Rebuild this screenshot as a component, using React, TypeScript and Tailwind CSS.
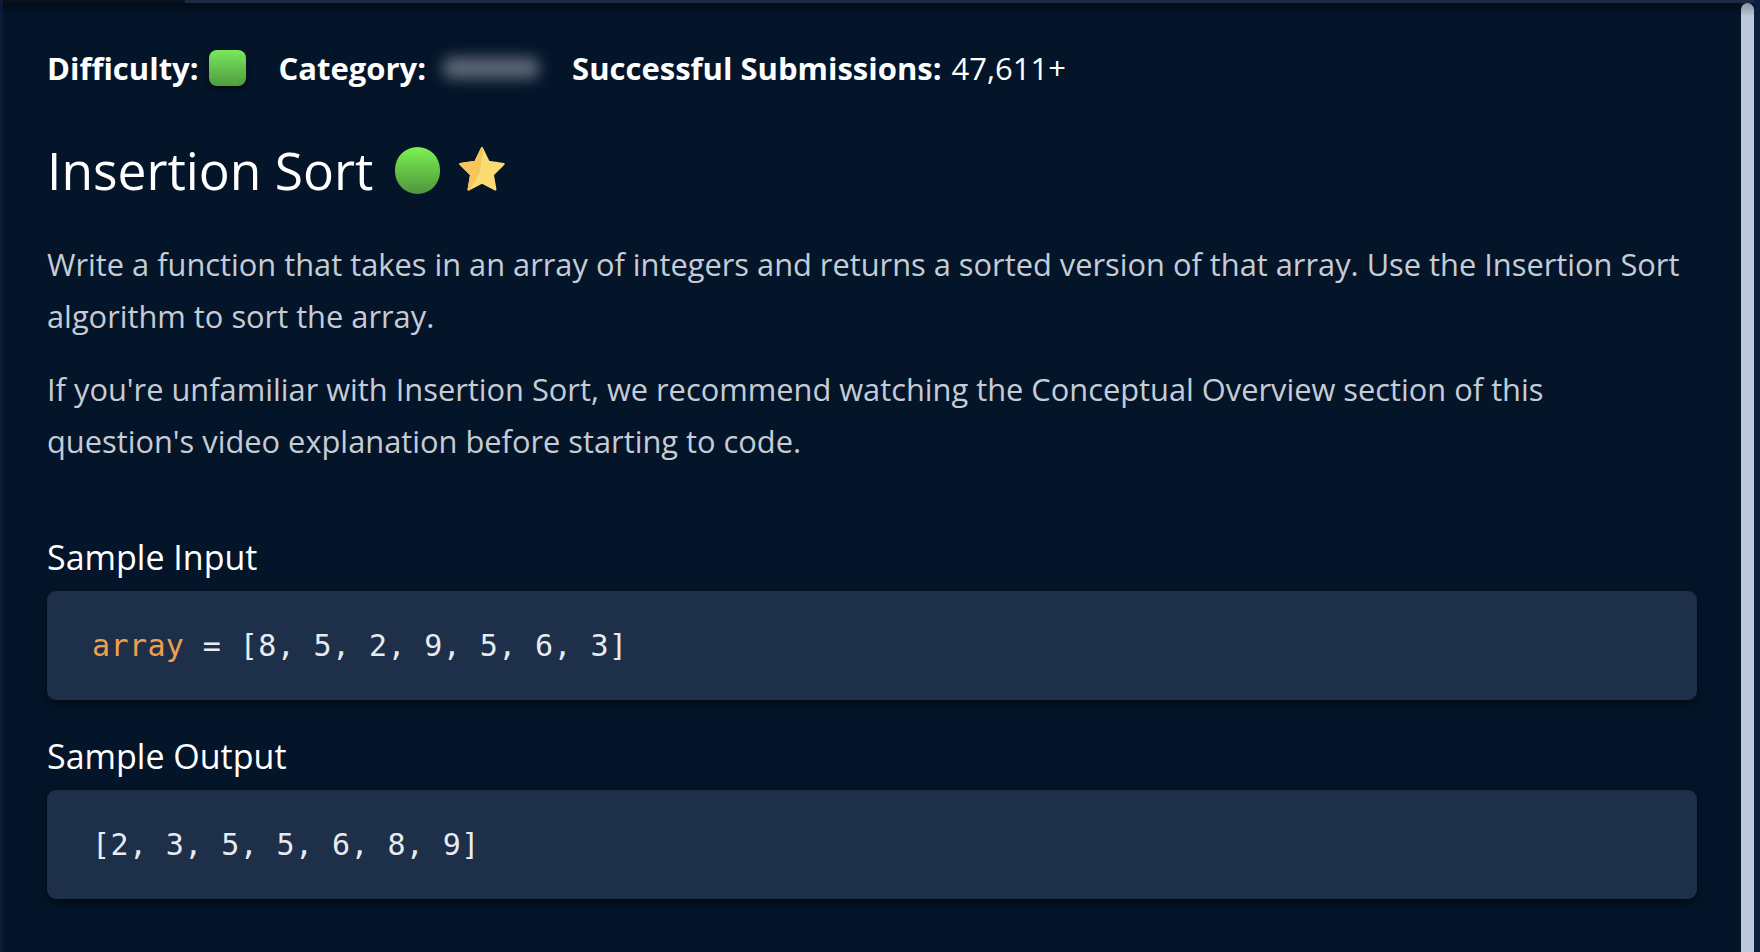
export default function App() {
    const code = "[8, 5, 2, 9, 5, 6, 3]";
    const output = "[2, 3, 5, 5, 6, 8, 9]";

    return (
        <div className="relative flex h-[952px] w-full overflow-hidden bg-[#04152a]">
            {/* left edge */}
            <div className="w-[3px] shrink-0 bg-[#0b1c36]" />

            <div className="flex min-w-0 flex-1 flex-col">
                {/* top strip */}
                <div className="flex h-[3px] shrink-0">
                    <div className="w-[182px] bg-[#08111e]" />
                    <div className="flex-1 bg-[#1c2b44]" />
                </div>

                <div className="flex-1 bg-gradient-to-b from-[#020c18] via-[#04152a] via-[12px] to-[#04152a] px-[44px] pt-[45px] font-['Open_Sans',sans-serif]">
                    {/* stats row */}
                    <div className="flex h-[40px] items-center text-[31px] leading-[40px] text-white">
                        <span className="font-bold">Difficulty:</span>
                        <span className="ml-[10px] h-[36px] w-[37px] rounded-[8px] bg-gradient-to-b from-[#7ae75f] to-[#4f9d3d] shadow-[0_3px_5px_rgba(0,0,0,0.6)]" />
                        <span className="ml-[33px] font-bold">Category:</span>
                        <span className="ml-[16px] h-[22px] w-[98px] rounded-full bg-[#5b6574] blur-[7px]" />
                        <span className="ml-[32px] font-bold">Successful Submissions:</span>
                        <span className="ml-[10px]">47,611+</span>
                    </div>

                    {/* title */}
                    <div className="mt-[52px] flex h-[60px] items-center">
                        <h1 className="text-[51.5px] leading-[60px] text-white">Insertion Sort</h1>
                        <span className="ml-[22px] h-[47px] w-[45px] rounded-full bg-gradient-to-b from-[#7cf350] to-[#4f953e]" />
                        <svg className="ml-[16px] h-[52px] w-[52px]" viewBox="0 0 24 24">
                            <polygon
                                points="12,2 15.09,8.26 22,9.27 17,14.14 18.18,21.02 12,17.77 5.82,21.02 7,14.14 2,9.27 8.91,8.26"
                                fill="#fbdc74"
                                stroke="#fbdc74"
                                strokeWidth="1"
                                strokeLinejoin="round"
                            />
                            <polygon
                                points="12,2 8.91,8.26 2,9.27 7,14.14 5.82,21.02 10.5,13"
                                fill="#f6c65a"
                                stroke="#f6c65a"
                                strokeWidth="1"
                                strokeLinejoin="round"
                            />
                        </svg>
                    </div>

                    {/* description */}
                    <p className="mt-[38px] text-[30.8px] leading-[52px] text-[#c6ccd5]">
                        Write a function that takes in an array of integers and returns a sorted version of that array. Use the Insertion Sort algorithm to sort the array.
                    </p>
                    <p className="mt-[21px] text-[30.8px] leading-[52px] text-[#c6ccd5]">
                        If you're unfamiliar with Insertion Sort, we recommend watching the Conceptual Overview section of this question's video explanation before starting to code.
                    </p>

                    {/* sample input */}
                    <h2 className="mt-[68px] text-[34px] leading-[44px] text-white">Sample Input</h2>
                    <div className="mt-[12px] flex h-[109px] items-center rounded-[9px] bg-[#1e2f4a] px-[45px] font-['DejaVu_Sans_Mono',monospace] text-[30px] tracking-[0.4px] text-[#e8ebf0] shadow-[0_4px_10px_rgba(0,0,0,0.55)]">
                        <span className="text-[#f0a04a]">array</span>
                        <span className="whitespace-pre"> = {code}</span>
                    </div>

                    {/* sample output */}
                    <h2 className="mt-[34px] text-[34px] leading-[44px] text-white">Sample Output</h2>
                    <div className="mt-[12px] flex h-[109px] items-center rounded-[9px] bg-[#1e2f4a] px-[45px] font-['DejaVu_Sans_Mono',monospace] text-[30px] tracking-[0.4px] text-[#e8ebf0] shadow-[0_4px_10px_rgba(0,0,0,0.55)]">
                        <span className="whitespace-pre">{output}</span>
                    </div>
                </div>
            </div>

            {/* scrollbar */}
            <div className="flex w-[13px] shrink-0 flex-col">
                <div className="h-[3px] bg-[#1c2b44]" />
                <div className="flex-1 rounded-t-full bg-linear-to-b from-[#8d949e] via-[#bccbdb] via-[14px] to-[#bccbdb]" />
            </div>
            <div className="w-[6px] shrink-0 bg-[#0b1f3d]" />
        </div>
    );
}
